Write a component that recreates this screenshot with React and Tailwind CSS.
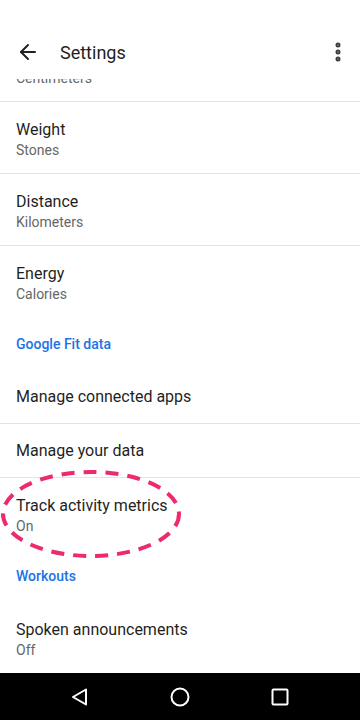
import { ArrowLeft, MoreVertical } from 'lucide-react';

const font = { fontFamily: 'Roboto, "Noto Sans", sans-serif' };

function Row({ title, subtitle, divider = true }) {
  return (
    <div className={`px-4 ${divider ? 'border-b border-[#e3e3e3]' : ''} ${subtitle ? 'h-[72px] pt-[17px]' : 'h-[54px] flex items-center'}`}>
      <div className="text-[16px] leading-[22px] text-[#1f1f1f]">{title}</div>
      {subtitle && <div className="text-[14px] leading-[18px] text-[#666666]">{subtitle}</div>}
    </div>
  );
}

function Section({ label }) {
  return (
    <div className="h-[52px] px-4 flex items-center">
      <span className="text-[14px] font-medium text-[#1a73e8]">{label}</span>
    </div>
  );
}

export default function App() {
  return (
    <div style={font} className="w-[360px] h-[720px] bg-white flex flex-col overflow-hidden">
      {/* Toolbar */}
      <div className="h-[79px] shrink-0 relative z-10 bg-white">
        <div className="mt-[30px] w-full h-[44px] flex items-center pl-[16px] pr-[10px]">
          <ArrowLeft size={24} strokeWidth={2} className="text-[#212121]" />
          <span className="ml-[20px] text-[18px] text-[#1f1f1f]">Settings</span>
          <MoreVertical size={24} strokeWidth={3} className="ml-auto text-[#3c3c3c]" />
        </div>
      </div>

      {/* Scrolled list */}
      <div className="flex-1 overflow-hidden">
        <div className="mt-[-49px]">
          <Row title="Height" subtitle="Centimeters" />
          <Row title="Weight" subtitle="Stones" />
          <Row title="Distance" subtitle="Kilometers" />
          <Row title="Energy" subtitle="Calories" divider={false} />
          <Section label="Google Fit data" />
          <Row title="Manage connected apps" />
          <Row title="Manage your data" />
          <div className="relative">
            <Row title="Track activity metrics" subtitle="On" divider={false} />
            <svg className="absolute left-0 top-[-8px] pointer-events-none" width="190" height="92" viewBox="0 0 190 92">
              <ellipse cx="91" cy="44" rx="88" ry="42" fill="none" stroke="#ec2a6d" strokeWidth="4" strokeDasharray="13 9" />
            </svg>
          </div>
          <Section label="Workouts" />
          <Row title="Spoken announcements" subtitle="Off" divider={false} />
        </div>
      </div>

      {/* Nav bar */}
      <div className="h-[47px] shrink-0 bg-black flex items-center justify-center gap-[80px]">
        <svg width="20" height="20" viewBox="0 0 20 20">
          <path d="M16 2.5 L3 10 L16 17.5 Z" fill="none" stroke="white" strokeWidth="2" strokeLinejoin="round" />
        </svg>
        <svg width="20" height="20" viewBox="0 0 20 20">
          <circle cx="10" cy="10" r="8.5" fill="none" stroke="white" strokeWidth="2" />
        </svg>
        <svg width="20" height="20" viewBox="0 0 20 20">
          <rect x="2.5" y="2.5" width="15" height="15" rx="1" fill="none" stroke="white" strokeWidth="2" />
        </svg>
      </div>
    </div>
  );
}
